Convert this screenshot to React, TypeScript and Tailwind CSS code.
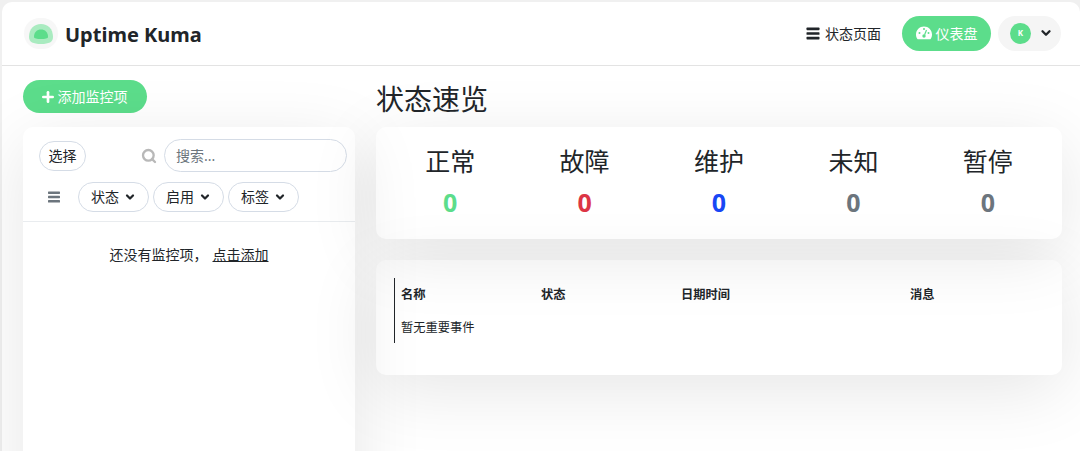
import { ChevronDown, Plus, Search } from 'lucide-react'

const FONT = "font-['Noto_Sans','Noto_Sans_CJK_SC',sans-serif]"

const STATS = [
  { label: '正常', color: 'text-[#5cdd8b]' },
  { label: '故障', color: 'text-[#dc3545]' },
  { label: '维护', color: 'text-[#1747f5]' },
  { label: '未知', color: 'text-[#6c757d]' },
  { label: '暂停', color: 'text-[#6c757d]' },
]

function KumaLogo() {
  return (
    <div className="w-[34px] h-[31px] rounded-full bg-[#f7f7f7] flex items-center justify-center">
      <svg width="24" height="20" viewBox="0 0 24 20">
        <path d="M0 13C0 5 5 0 12 0s12 5 12 13c0 5-4 7-12 7S0 18 0 13z" fill="#a9ebc0" />
        <path d="M5 13C5 8 8 5.500 12 5.500S19 8 19 13c0 1.500-3 2-7 2s-7-.5-7-2z" fill="#5cdd8b" />
      </svg>
    </div>
  )
}

function BarsIcon({ className }: { className: string }) {
  return (
    <svg viewBox="0 0 12 12" className={className} fill="currentColor">
      <rect x="0" y="0.500" width="12" height="2.400" rx="0.600" />
      <rect x="0" y="4.800" width="12" height="2.400" rx="0.600" />
      <rect x="0" y="9.100" width="12" height="2.400" rx="0.600" />
    </svg>
  )
}

function GaugeIcon() {
  return (
    <svg viewBox="0 0 16 14" className="w-4 h-[14px]">
      <path d="M8 0.500C3.600 0.500 0 4 0 8.400c0 1.700.5 3.200 1.400 4.500.2.300.5.400.8.400h11.600c.3 0 .6-.1.800-.4.900-1.300 1.400-2.800 1.400-4.500C16 4 12.400.5 8 .5z" fill="#fff" />
      <circle cx="8" cy="3" r="1" fill="#5cdd8b" />
      <circle cx="3.500" cy="7" r="1" fill="#5cdd8b" />
      <circle cx="12.500" cy="7" r="1" fill="#5cdd8b" />
      <path d="M10.500 4 8.600 8.800" stroke="#5cdd8b" strokeWidth="1.200" />
      <circle cx="8" cy="10" r="1.700" fill="#5cdd8b" />
    </svg>
  )
}

function FilterButton({ label }: { label: string }) {
  return (
    <button className="h-[30px] w-[71px] shrink-0 rounded-full border border-[#d5dce6] flex items-center justify-center gap-[5px] text-[14px] leading-[20px] text-[#212529] pb-px">
      {label}
      <ChevronDown className="w-[12px] h-[12px] mt-px" strokeWidth={4.500} />
    </button>
  )
}

export default function App() {
  return (
    <div className={`${FONT} w-[1080px] h-[451px] overflow-hidden bg-[#f0f0f0] pt-[2px] pl-[2px]`}>
      <div className="h-[600px] bg-white rounded-tl-[10px] rounded-tr-[10px]">
        {/* Header */}
        <header className="h-[64px] border-b border-[#e3e3e3] flex items-center pl-[22px] pr-[19px]">
          <KumaLogo />
          <span className="ml-[7px] mt-[2px] text-[20px] font-bold text-[#212529]">Uptime Kuma</span>
          <div className="ml-auto flex items-center -mt-px">
            <a className="flex items-center gap-[5px] text-[14px] text-[#212529] mr-[21px]">
              <BarsIcon className="w-[14px] h-[13px] text-[#212529]" />
              状态页面
            </a>
            <a className="w-[89px] h-[35px] rounded-full bg-[#5cdd8b] text-white text-[14px] flex items-center justify-center gap-[4px]">
              <GaugeIcon />
              仪表盘
            </a>
            <div className="ml-[7px] w-[63px] h-[35px] rounded-full bg-[#f5f5f5] flex items-center pl-[12px] gap-[8px]">
              <div className="w-[21px] h-[21px] rounded-full bg-[#5cdd8b] text-white text-[8px] font-bold flex items-center justify-center">K</div>
              <ChevronDown className="w-[14px] h-[14px] text-[#212529]" strokeWidth={4} />
            </div>
          </div>
        </header>

        {/* Body */}
        <main className="flex pl-[21px] pr-[18px] pt-[14px] gap-[21px]">
          <section className="w-[332px] shrink-0">
            <button className="w-[124px] h-[33px] rounded-full bg-[#5cdd8b] text-white text-[14px] flex items-center justify-center gap-[2px] pr-[3px]">
              <Plus className="w-[16px] h-[16px]" strokeWidth={4} />
              添加监控项
            </button>
            <div className="mt-[14px] h-[400px] rounded-[10px] shadow-[0_15px_70px_rgba(0,0,0,0.1)]">
              <div className="border-b border-[#e9ecef] h-[95px] pl-[16px] pt-[12px]">
                <div className="flex items-center">
                  <button className="w-[47px] h-[30px] shrink-0 rounded-full border border-[#d5dce6] text-[14px] text-[#212529] flex items-center justify-center">选择</button>
                  <Search className="ml-[55px] w-[16px] h-[16px] shrink-0 text-[#b8b8b8]" strokeWidth={3.500} />
                  <div className="ml-[7px] w-[183px] h-[33px] shrink-0 rounded-full border border-[#d5dce6] flex items-center px-[11px] text-[14px] text-[#6c757d]">搜索...</div>
                </div>
                <div className="flex items-center mt-[10px] gap-[4px]">
                  <BarsIcon className="ml-[9px] mr-[14px] w-[12px] h-[12px] text-[#6c757d]" />
                  <FilterButton label="状态" />
                  <FilterButton label="启用" />
                  <FilterButton label="标签" />
                </div>
              </div>
              <div className="pt-[22px] flex justify-center text-[14px] text-[#212529]">
                <span>还没有监控项，</span>
                <a className="ml-[5px] underline">点击添加</a>
              </div>
            </div>
          </section>

          <section className="flex-1">
            <h1 className="text-[28px] leading-[36px] text-[#212529] mt-[1px]">状态速览</h1>
            <div className="mt-[10px] h-[112px] rounded-[10px] shadow-[0_15px_70px_rgba(0,0,0,0.1)] grid grid-cols-5 px-[7px] pt-[16px]">
              {STATS.map((s) => (
                <div key={s.label} className="flex flex-col items-center">
                  <div className="text-[25px] leading-[36px] text-[#212529]">{s.label}</div>
                  <div className={`text-[25px] leading-[36px] font-bold mt-[5px] ${s.color}`}>0</div>
                </div>
              ))}
            </div>
            <div className="mt-[21px] h-[115px] rounded-[10px] shadow-[0_15px_70px_rgba(0,0,0,0.1)] pl-[18px] pt-[18px]">
              <div className="border-l border-[#212529] h-[65px] pl-[6px] text-[12.250px] text-[#212529]">
                <div className="grid grid-cols-[140px_140px_229px_100px] font-bold pt-[9px] leading-[16px]">
                  <span>名称</span>
                  <span>状态</span>
                  <span>日期时间</span>
                  <span>消息</span>
                </div>
                <div className="mt-[17px] leading-[16px]">暂无重要事件</div>
              </div>
            </div>
          </section>
        </main>
      </div>
    </div>
  )
}
